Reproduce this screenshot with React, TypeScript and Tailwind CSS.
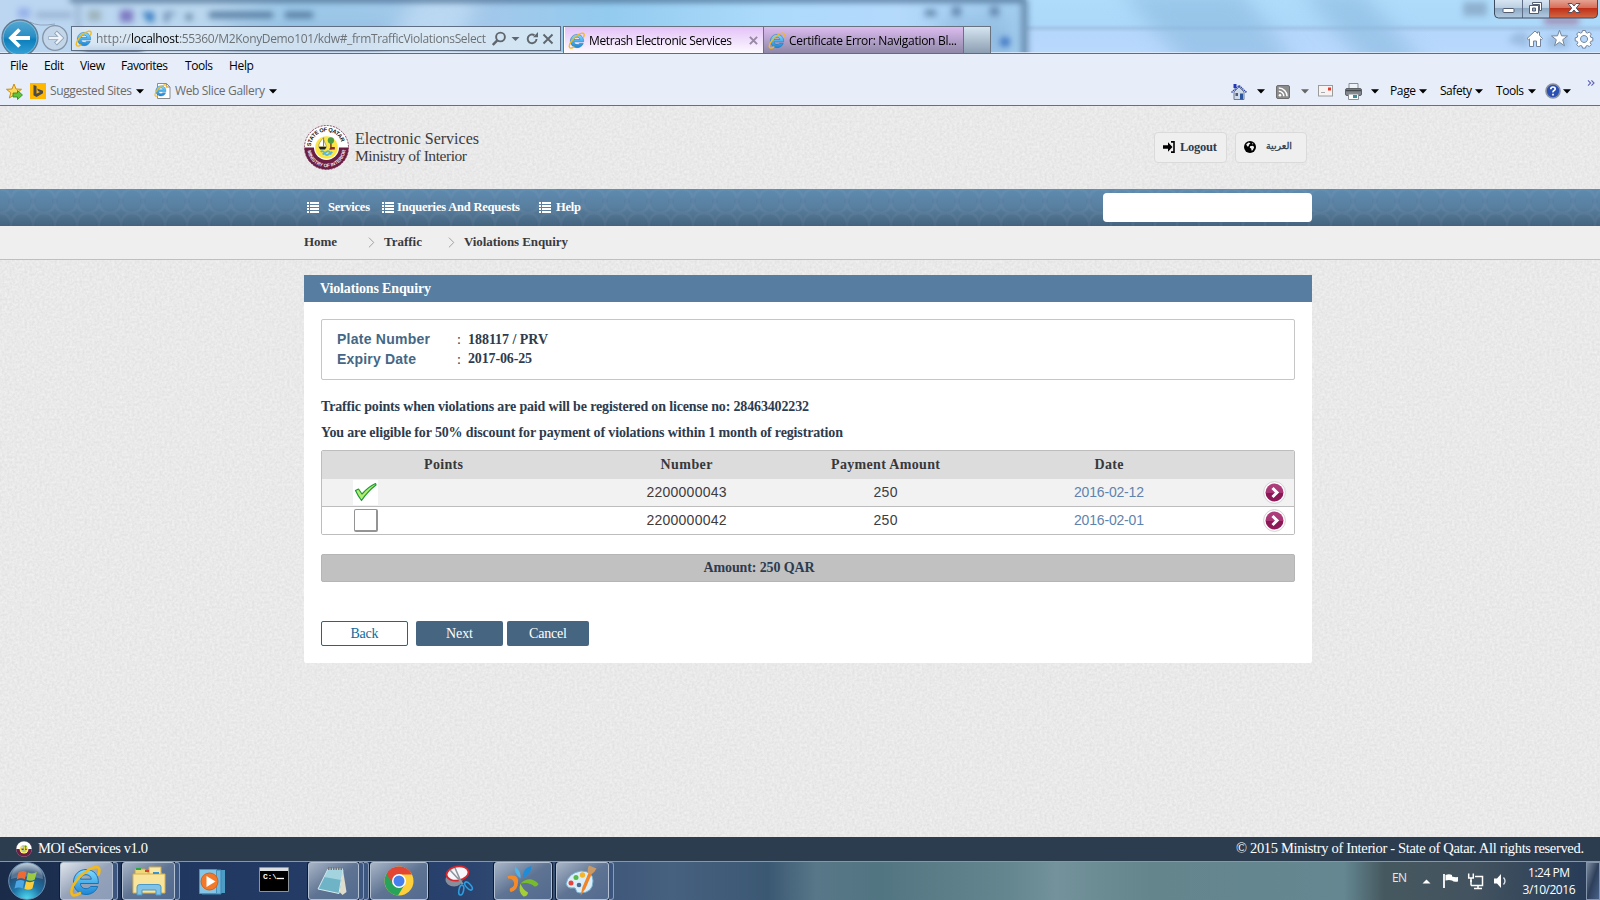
import React, { useLayoutEffect, useRef, useState } from "react";

/* Text run whose tracking is computed so that it fills the given width. */
function Fit({ w, className = "", children }: { w: number; className?: string; children: string }) {
  const ref = useRef<HTMLSpanElement>(null);
  const [ls, setLs] = useState<number | null>(null);
  useLayoutEffect(() => {
    if (ref.current && ls === null) {
      const n = ref.current.getBoundingClientRect().width;
      setLs((w - n) / Math.max(1, children.length - 1));
    }
  }, [ls, w, children]);
  return (
    <span
      ref={ref}
      className={"inline-block shrink-0 whitespace-pre " + className}
      style={ls === null ? undefined : { letterSpacing: ls, marginRight: -ls }}
    >
      {children}
    </span>
  );
}

const ui = "font-['Open_Sans','Noto_Sans',sans-serif]";

function IE({ className = "" }: { className?: string }) {
  return (
    <svg viewBox="0 0 32 32" className={"shrink-0 " + className}>
      <defs>
        <linearGradient id="ieb" x1="0" y1="0" x2="0" y2="1">
          <stop offset="0" stopColor="#7fdcff" />
          <stop offset="1" stopColor="#1c86d6" />
        </linearGradient>
      </defs>
      <path
        d="M17 4.500C10 4.500 4.500 10 4.500 17S10 29.500 17 29.500c5.500 0 10-3 11.700-8H21.500c-1 1.500-2.600 2.200-4.500 2.200-3.300 0-5.400-1.900-5.600-5.200H29.300C30 10.500 25 4.500 17 4.500ZM11.500 14.200c.4-2.800 2.500-4.500 5.500-4.500s5 1.700 5.300 4.500Z"
        fill="url(#ieb)"
        stroke="#1673b8"
        strokeWidth="1"
      />
      <path
        d="M29.500 9.500C31.500 4 30 1.500 26 2.200 19 3.500 8 12.500 3.800 21.500 1.500 26.500 2 31 6 30.300c1.500-.2 3.500-1.200 5-2.200"
        fill="none"
        stroke="#f6b915"
        strokeWidth="2.600"
        strokeLinecap="round"
      />
    </svg>
  );
}

function Arrow({ className = "" }: { className?: string }) {
  return (
    <svg viewBox="0 0 8 5" className={"h-[5px] w-[8px] shrink-0 " + className}>
      <path d="M0 0.300H8L4 4.600Z" fill="currentColor" />
    </svg>
  );
}

function Emblem({ className = "", rim = true }: { className?: string; rim?: boolean }) {
  return (
    <svg viewBox="0 0 46 46" className={"shrink-0 " + className}>
      <circle cx="23" cy="23" r="22.500" fill="#fff" stroke="#7c2a4e" strokeWidth="0.900" strokeDasharray="2 1.200" />
      <path d="M.5 23a22.500 22.500 0 0 0 45 0Z" fill="#6b1d44" />
      <circle cx="23" cy="23" r="12.800" fill="#fff" />
      <circle cx="23" cy="23" r="11.600" fill="#fbe645" />
      <path d="M20 13v9M20 13c-3 3-5 6-5 9h5ZM20 15l3 7h-3Z" fill="#fff" stroke="#666" strokeWidth="0.500" />
      <path d="M15 22.500h8l-1.500 2.500h-5Z" fill="#222" />
      <path d="M27.500 17v8" stroke="#7a4a25" strokeWidth="1.600" />
      <circle cx="27.500" cy="15.800" r="3.200" fill="#4d9a3f" />
      <path d="M25.500 25h6v-2.500h-4Z" fill="#8a2a38" />
      <path d="M17 27.500q1.500-1.500 3 0t3 0 3 0 3 0M19 30q1.500-1.500 3 0t3 0 3 0" fill="none" stroke="#58b7dd" strokeWidth="1.700" />
      {rim && (
        <>
          <defs>
            <path id="arcTop" d="M7.300 25a15.900 15.900 0 1 1 31.400 0" />
            <path id="arcBot" d="M3.400 23.500a19.600 19.600 0 0 0 39.200 0" />
          </defs>
          <text fontFamily="Liberation Sans, sans-serif" fontSize="5.700" fontWeight="700" fill="#111">
            <textPath href="#arcTop" textLength="44" startOffset="3">STATE OF QATAR</textPath>
          </text>
          <text fontFamily="Liberation Sans, sans-serif" fontSize="5" fontWeight="700" fill="#f4e4ec">
            <textPath href="#arcBot" textLength="56" startOffset="3">MINISTRY OF INTERIOR</textPath>
          </text>
        </>
      )}
    </svg>
  );
}

function TitleBackdrop() {
  return (
    <svg className="absolute inset-0 h-[54px] w-[1600px]" viewBox="0 0 1600 54" preserveAspectRatio="none">
      <defs>
        <filter id="b3" x="-30%" y="-100%" width="160%" height="300%" colorInterpolationFilters="sRGB"><feGaussianBlur stdDeviation="3" /></filter>
        <filter id="b8" x="-30%" y="-100%" width="160%" height="300%" colorInterpolationFilters="sRGB"><feGaussianBlur stdDeviation="10" /></filter>
        <linearGradient id="tbg" x1="0" x2="1" y1="0" y2="0">
          <stop offset="0" stopColor="#bcd6f2" />
          <stop offset="0.130" stopColor="#b9d6ee" />
          <stop offset="0.180" stopColor="#9cc8e8" />
          <stop offset="0.300" stopColor="#a3c8ea" />
          <stop offset="0.380" stopColor="#93cbef" />
          <stop offset="0.480" stopColor="#acdafb" />
          <stop offset="0.560" stopColor="#b4d9fb" />
          <stop offset="0.620" stopColor="#a2cdee" />
          <stop offset="1" stopColor="#b0dcfd" />
        </linearGradient>
        <linearGradient id="tbr" x1="0" x2="0" y1="0" y2="1">
          <stop offset="0" stopColor="#b0dcfb" />
          <stop offset="0.450" stopColor="#acd8f9" />
          <stop offset="0.520" stopColor="#a2c6e8" />
          <stop offset="0.600" stopColor="#b5d7fb" />
          <stop offset="1" stopColor="#b9d9fd" />
        </linearGradient>
      </defs>
      <rect width="1600" height="54" fill="url(#tbg)" />
      <rect x="1026" width="574" height="54" fill="url(#tbr)" />
      <g filter="url(#b8)">
        <path d="M1120-10h120l60 80h-110ZM1300-10h60l70 80h-60Z" fill="#86b6dc" opacity="0.550" />
        <rect x="230" y="30" width="190" height="30" fill="#8cb6dd" />
        <path d="M420-10h60l-30 80h-80Z" fill="#c5def5" opacity="0.700" />
        <rect x="940" y="20" width="70" height="40" fill="#8fb8de" opacity="0.800" />
      </g>
      <g filter="url(#b3)">
        <rect x="70" y="-3" width="955" height="5" fill="#47698c" />
        <rect x="1021" y="0" width="7" height="60" fill="#6b8fb0" />
        <rect x="76" y="0" width="4" height="60" fill="#95b0cc" />
        <rect x="18" y="8" width="12" height="10" fill="#95b0e8" />
        <rect x="36" y="12" width="36" height="6" fill="#98b2d1" />
        <rect x="88" y="10" width="13" height="11" fill="#9db3bb" />
        <rect x="120" y="10" width="13" height="12" fill="#7c78c0" />
        <path d="M142 12h12v10h-6Z" fill="#387cc0" />
        <path d="M164 12h11v3h-6v7h-5Z" fill="#6d8db3" />
        <circle cx="189" cy="17" r="3" fill="#476888" />
        <rect x="209" y="12" width="64" height="6" fill="#51779c" />
        <rect x="285" y="12" width="28" height="6" fill="#51779c" />
        <rect x="84" y="48" width="58" height="6" fill="#205eab" />
        <rect x="925" y="10" width="11" height="6" fill="#5d82a4" />
        <rect x="952" y="7" width="9" height="9" fill="#6385ad" />
        <rect x="990" y="7" width="9" height="9" fill="#6385ad" />
        <circle cx="1005" cy="42" r="5" fill="#3c73c4" />
        <rect x="1463" y="2" width="24" height="14" fill="#8fb1d0" />
        <rect x="1544" y="18" width="35" height="6" fill="#9d80a8" />
        <path d="M1508 42q6-14 20-8v14ZM1548 36h20v12h-20Z" fill="#82a4c8" opacity="0.500" />
      </g>
      <rect y="52" width="1600" height="1" fill="#e8f1fc" opacity="0.700" />
      <rect y="53" width="1600" height="1" fill="#5d6c84" />
    </svg>
  );
}

function WindowControls() {
  return (
    <svg viewBox="0 0 104 21" className="absolute left-[1494px] top-0 h-[21px] w-[104px]">
      <defs>
        <linearGradient id="wb" x1="0" x2="0" y1="0" y2="1">
          <stop offset="0" stopColor="#dbe8f5" /><stop offset="0.450" stopColor="#bccfe2" />
          <stop offset="0.500" stopColor="#8ea9c4" /><stop offset="1" stopColor="#b5cce2" />
        </linearGradient>
        <linearGradient id="wr" x1="0" x2="0" y1="0" y2="1">
          <stop offset="0" stopColor="#e8a99b" /><stop offset="0.450" stopColor="#d8705a" />
          <stop offset="0.500" stopColor="#c03018" /><stop offset="1" stopColor="#d26a45" />
        </linearGradient>
      </defs>
      <path d="M.5-1V14q0 4 4 4h95q4 0 4-4V-1Z" fill="url(#wb)" />
      <path d="M55.500-1v19h44q4 0 4-4V-1Z" fill="url(#wr)" />
      <path d="M28.500 0v18M55.500 0v18" stroke="#5c6f87" />
      <path d="M.5-1V14q0 4 4 4h95q4 0 4-4V-1" fill="none" stroke="#3d4b60" />
      <rect x="9" y="8.500" width="11" height="4" rx="1" fill="#fff" stroke="#545d70" />
      <path d="M38.500 2.500h9v8h-2v-6h-7Z" fill="#fff" stroke="#545d70" />
      <path d="M35.500 5.500h9v8h-9ZM38.500 8h3v3h-3Z" fill="#fff" fillRule="evenodd" stroke="#545d70" />
      <path d="M74 3.500h4l2 2.500 2-2.500h4l-3.700 4.500 3.700 4.500h-4l-2-2.500-2 2.500h-4l3.700-4.500Z" fill="#fff" stroke="#545060" />
    </svg>
  );
}

function ToolIcons() {
  return (
    <svg viewBox="0 0 72 22" className="absolute left-[1524px] top-[27px] h-[22px] w-[72px]" fill="#fff" stroke="#73849a" strokeWidth="1" strokeLinejoin="round">
      <path d="M3 11.500 11 4l2.500 2.300V5h2v3.300l3 3.200-1 1.200-1-.8v7.600h-4v-5.500h-3v5.500h-4v-7.600l-1 .8Z" />
      <path d="m35.500 3.200 2 5.600 6 .2-4.800 3.700 1.700 6-4.900-3.500-4.900 3.500 1.700-6L27.500 9l6-.2Z" />
      <path
        fillRule="evenodd"
        d="M58.500 3.500h3l.5 2 1.500.6 1.800-1.100 2 2-1.100 1.800.6 1.500 2 .5v3l-2 .5-.6 1.500 1.100 1.800-2 2-1.800-1.100-1.500.6-.5 2h-3l-.5-2-1.500-.6-1.800 1.100-2-2 1.100-1.800-.6-1.500-2-.5v-3l2-.5.6-1.500-1.100-1.800 2-2L56.500 6.100l1.500-.6ZM60 8.500a3.500 3.500 0 1 0 .1 0Z"
      />
    </svg>
  );
}

function TitleBar() {
  return (
    <div className={"relative h-[54px] overflow-hidden " + ui}>
      <TitleBackdrop />
      <WindowControls />
      <ToolIcons />
      <div className="relative flex h-[54px] items-start">
        <svg viewBox="0 0 71 54" className="h-[54px] w-[71px] shrink-0">
          <defs>
            <linearGradient id="bk" x1="0" x2="0" y1="0" y2="1">
              <stop offset="0" stopColor="#5aa9d2" /><stop offset="0.450" stopColor="#2a8fc4" />
              <stop offset="0.550" stopColor="#0b7fbd" /><stop offset="1" stopColor="#3aa4d8" />
            </linearGradient>
          </defs>
          <path d="M30 22q8 5 25 2" fill="none" stroke="#8fa3bb" />
          <circle cx="20" cy="38" r="18" fill="url(#bk)" stroke="#64798f" strokeWidth="1.300" />
          <circle cx="20" cy="38" r="16.800" fill="none" stroke="#8cc8e4" strokeWidth="0.700" />
          <path d="M30 38H12M19.500 29.500 11 38l8.500 8.500" fill="none" stroke="#fff" strokeWidth="3.800" />
          <circle cx="55" cy="38" r="12.300" fill="#c3d5e8" stroke="#8494a8" strokeWidth="1.300" />
          <path d="M48.500 38h12M55.500 32l6 6-6 6" fill="none" stroke="#8ea0b6" strokeWidth="4" />
          <path d="M49 38h11M56 32.500l5.500 5.500-5.500 5.500" fill="none" stroke="#eef4fa" strokeWidth="2.400" />
        </svg>
        <div className="mt-[26px] flex h-[25px] w-[490px] shrink-0 items-center border border-[#5f6e82] bg-[#e4edf6]/75 pl-[3px] text-[12px] text-[#6d7276]">
          <IE className="h-[17px] w-[17px]" />
          <div className="ml-[4px] flex w-[391px] pt-px">
            <Fit w={35}>http://</Fit>
            <Fit w={48} className="text-black">localhost</Fit>
            <Fit w={307}>:55360/M2KonyDemo101/kdw#_frmTrafficViolationsSelect</Fit>
          </div>
          <svg viewBox="0 0 64 16" className="ml-[5px] h-[16px] w-[64px] shrink-0" fill="none" stroke="#60666d" strokeWidth="1.900">
            <circle cx="8.500" cy="6" r="4.400" /><path d="m5.300 9.300-4.500 4.700" strokeWidth="2.400" />
            <path d="M19.500 6h8l-4 4Z" fill="#60666d" stroke="none" />
            <path d="M44.500 8a4.400 4.400 0 1 1-2-3.800" /><path d="M41 6.200h5V1Z" fill="#60666d" stroke="none" />
            <path d="m51.500 3.500 9 9M60.500 3.500l-9 9" />
          </svg>
        </div>
        <div className="ml-[2px] mt-[26px] flex h-[27px] w-[428px] shrink-0 border border-b-0 border-[#69737f] text-[12px] text-black">
          <div className="flex w-[199px] items-center border-l border-white bg-linear-to-b from-[#e3c2f7] to-[#fdfaff] pl-[3px] pt-px">
            <IE className="h-[17px] w-[17px]" />
            <Fit w={143} className="ml-[4px]">Metrash Electronic Services</Fit>
            <svg viewBox="0 0 10 10" className="ml-[17px] h-[9px] w-[9px]"><path d="m1 1 8 8M9 1 1 9" stroke="#9887a5" strokeWidth="2.200" /></svg>
          </div>
          <div className="flex w-[201px] items-center border-x border-[#69737f] bg-linear-to-b from-[#dcbcf0] to-[#8f87a8] pl-[4px] pt-px">
            <IE className="h-[17px] w-[17px]" />
            <Fit w={168} className="ml-[4px]">Certificate Error: Navigation Bl...</Fit>
          </div>
          <div className="flex-1 bg-linear-to-b from-[#d6e5f1] to-[#8c9eb2]" />
        </div>
      </div>
    </div>
  );
}

function Menus() {
  return (
    <div className={"h-[52px] border-b border-[#6e6e72] bg-[#e7eefa] text-[12px] text-black " + ui}>
      <div className="flex h-[24px] items-center pl-[10px]">
        <Fit w={18}>File</Fit>
        <Fit w={20} className="ml-[16px]">Edit</Fit>
        <Fit w={25} className="ml-[16px]">View</Fit>
        <Fit w={47} className="ml-[16px]">Favorites</Fit>
        <Fit w={28} className="ml-[17px]">Tools</Fit>
        <Fit w={25} className="ml-[16px]">Help</Fit>
      </div>
      <div className="flex h-[26px] items-center justify-between">
        <div className="flex items-center pl-[6px] text-[#6b6b6b]">
          <svg viewBox="0 0 17 17" className="h-[17px] w-[17px]">
            <path d="m8 1 2 5 5.500.3-4.300 3.500 1.500 5.200L8 12l-4.700 3 1.500-5.200L.5 6.300 6 6Z" fill="#fbd95a" stroke="#c98d12" />
            <path d="M7 10h4.500V7.500L16.500 12l-5 4.500V14H7Z" fill="#5fc43c" stroke="#2c8420" strokeWidth="0.800" />
          </svg>
          <svg viewBox="0 0 16 16" className="ml-[7px] h-[16px] w-[16px]">
            <rect width="16" height="16" fill="#ffb700" />
            <path d="m3.500 2 3 1v7.700L10 9 8 8l-1-2.600 6 2.300v2.600L6.500 14l-3-1.700Z" fill="#4b4b4b" />
          </svg>
          <Fit w={82} className="ml-[4px]">Suggested Sites</Fit>
          <Arrow className="ml-[4px] text-black" />
          <div className="relative ml-[10px] h-[16px] w-[17px]">
            <svg viewBox="0 0 17 16" className="absolute inset-0 h-[16px] w-[17px]"><path d="M3.500.5h9l3.500 3.500v11.500H3.500ZM12.500.5V4H16" fill="#fff" stroke="#8c8c8c" /></svg>
            <IE className="absolute left-0 top-[1px] h-[13px] w-[13px]" />
          </div>
          <Fit w={90} className="ml-[4px]">Web Slice Gallery</Fit>
          <Arrow className="ml-[4px] text-black" />
        </div>
        <div className="flex w-[369px] items-center">
          <svg viewBox="0 0 16 17" className="h-[17px] w-[16px]">
            <path d="M3 9v7.500h10V9L8 4Z" fill="#cfdbe8" stroke="#6c7b92" /><path d="M.5 9.500 8 2.500l7.500 7" fill="none" stroke="#2f46a8" strokeWidth="1.500" strokeDasharray="1.500 .6" />
            <path d="M2.500 1h3v4h-3Z" fill="#2238b8" /><path d="M9 10.500h3v6H9Z" fill="#2c55a0" /><path d="M4.500 10h2.500v3H4.500Z" fill="#4c5a77" />
          </svg>
          <Arrow className="ml-[10px]" />
          <svg viewBox="0 0 14 14" className="ml-[11px] mt-[2px] h-[14px] w-[14px]">
            <rect x=".5" y=".5" width="13" height="13" rx="1.500" fill="#8c8c8c" stroke="#6e6e6e" />
            <circle cx="4" cy="10.300" r="1.300" fill="#fff" /><path d="M2.800 6.300a5 5 0 0 1 5 5M2.800 3a8.300 8.300 0 0 1 8.300 8.300" fill="none" stroke="#fff" strokeWidth="1.500" />
          </svg>
          <Arrow className="ml-[11px] text-[#666]" />
          <svg viewBox="0 0 15 12" className="ml-[9px] h-[12px] w-[15px]">
            <rect x=".5" y=".5" width="14" height="10.500" fill="#f7f3f3" stroke="#9b9b9b" /><path d="M10 2.500h3v3h-3Z" fill="#e23a2e" /><path d="M3 7.500h4" stroke="#aaa" />
          </svg>
          <svg viewBox="0 0 17 17" className="ml-[12px] h-[17px] w-[17px]">
            <path d="M4 .5h9V6H4Z" fill="#eef3f8" stroke="#858c94" /><rect x=".5" y="5.500" width="16" height="7" rx="1.500" fill="#83888d" stroke="#5d6267" />
            <path d="M1 7.500h15" stroke="#45494d" strokeWidth="1.500" /><path d="M3.500 11h10v5.500h-10Z" fill="#fff" stroke="#8b9196" /><path d="M8 12h4v3H8Z" fill="#3b8f96" />
          </svg>
          <Arrow className="ml-[9px]" />
          <Fit w={26} className="ml-[11px]">Page</Fit>
          <Arrow className="ml-[3px]" />
          <Fit w={32} className="ml-[13px]">Safety</Fit>
          <Arrow className="ml-[3px]" />
          <Fit w={28} className="ml-[13px]">Tools</Fit>
          <Arrow className="ml-[4px]" />
          <svg viewBox="0 0 16 16" className="ml-[9px] h-[16px] w-[16px]">
            <circle cx="8" cy="8" r="7" fill="#2a50b4" stroke="#8c939e" strokeWidth="1.600" />
            <path d="M5.800 6.300q0-2.300 2.200-2.300t2.200 1.900q0 1-1.200 1.600t-1 1.900M8 10.800v1.700" fill="none" stroke="#fff" strokeWidth="1.700" />
          </svg>
          <Arrow className="ml-[2px]" />
          <svg viewBox="0 0 8 7" className="mb-[17px] ml-[16px] h-[6px] w-[8px]"><path d="m.5.500 3 3-3 3M4.500.500l3 3-3 3" fill="none" stroke="#6064b8" strokeWidth="1.300" /></svg>
        </div>
      </div>
    </div>
  );
}

function Texture() {
  return (
    <svg className="absolute inset-0 h-full w-full">
      <filter id="grain" x="0" y="0" width="100%" height="100%" colorInterpolationFilters="sRGB">
        <feTurbulence type="fractalNoise" baseFrequency="0.400" numOctaves="2" seed="4" stitchTiles="stitch" />
        <feColorMatrix values="0.090 0 0 0 0.869  0.090 0 0 0 0.869  0.090 0 0 0 0.869  0 0 0 0 1" />
      </filter>
      <rect width="100%" height="100%" filter="url(#grain)" />
    </svg>
  );
}

function ListIcon({ className = "" }: { className?: string }) {
  return (
    <svg viewBox="0 0 12 11" className={"h-[11px] w-[12px] shrink-0 " + className} shapeRendering="crispEdges">
      <path d="M0 1h2M0 4h2M0 7h2M0 10h2M3 1h9M3 4h9M3 7h9M3 10h9" stroke="#fff" strokeWidth="2" />
    </svg>
  );
}

function Chevron({ className = "" }: { className?: string }) {
  return (
    <svg viewBox="0 0 7 12" className={"h-[11px] w-[7px] shrink-0 " + className}><path d="m.7.700 5.300 5.300-5.300 5.300" fill="none" stroke="#999" /></svg>
  );
}

function SiteHeader() {
  return (
    <>
      <header className="relative flex h-[83px] items-start pl-[304px]">
        <Emblem className="mt-[19px] h-[45px] w-[45px]" />
        <div className="ml-[6px] mt-[24px] flex w-[799px] flex-col items-start text-[16px] leading-[17px] text-[#3b3b3f]">
          <Fit w={124}>Electronic Services</Fit>
          <Fit w={112} className="text-[15.500px]">Ministry of Interior</Fit>
        </div>
        <button className="mt-[26px] flex h-[31px] w-[73px] shrink-0 items-center rounded-[4px] border border-[#dadada] bg-[#efefef] pb-px pl-[8px] text-[12.500px] font-bold text-[#2c3c50]">
          <svg viewBox="0 0 12 12" className="h-[12px] w-[12px] shrink-0">
            <path d="M0 4.300h5V1.300L9.500 6 5 10.700V7.700H0Z" fill="#000" /><path d="M8 .9h3v10.200H8" fill="none" stroke="#000" strokeWidth="1.600" />
          </svg>
          <Fit w={37} className="ml-[5px]">Logout</Fit>
        </button>
        <button className="ml-[8px] mt-[26px] flex h-[31px] w-[72px] shrink-0 items-center rounded-[4px] border border-[#dadada] bg-[#efefef] pb-px pl-[8px] text-[#2c3c50]">
          <svg viewBox="0 0 12 12" className="h-[12px] w-[12px] shrink-0">
            <circle cx="6" cy="6" r="6" fill="#000" />
            <path d="M2.200 3.300 4.700 1.500l1.800.8L5 3.800l-.3 1.500-1.400.3ZM6 5.200l2.400-.5 1.200.6.500 1.200-1.400 2.800-1 .5-.6-2.300-1.300-.8ZM8 1.800l1.500 1.100-1 .6Z" fill="#efefef" />
          </svg>
          <span dir="rtl" className="ml-[10px] mb-[2px] whitespace-nowrap font-['DejaVu_Sans',sans-serif] text-[9.500px] leading-[14px] [-webkit-text-stroke:0.300px_#2c3c50]">العربية</span>
        </button>
      </header>
      <nav className="relative flex h-[37px] items-center bg-linear-to-b from-[#5e8bb0] via-[#587f9f] to-[#44637f] pl-[307px] text-[12.500px] font-bold text-white">
        <svg className="absolute inset-0 h-full w-full">
          <defs>
            <pattern id="lattice" width="22" height="24" patternUnits="userSpaceOnUse">
              <path d="M0 0q11 1 11 12Q11 23 0 24M22 0Q11 1 11 12q0 11 11 12" fill="none" stroke="#a5b7c5" strokeWidth="2.500" opacity="0.090" />
              <circle cx="11" cy="12" r="3" fill="#2d4f6c" opacity="0.080" />
            </pattern>
          </defs>
          <rect width="100%" height="100%" fill="url(#lattice)" />
        </svg>
        <div className="relative flex items-center">
          <ListIcon />
          <Fit w={42} className="mb-px ml-[9px]">Services</Fit>
          <ListIcon className="ml-[12px]" />
          <Fit w={123} className="mb-px ml-[3px]">Inqueries And Requests</Fit>
          <ListIcon className="ml-[19px]" />
          <Fit w={25} className="mb-px ml-[5px]">Help</Fit>
          <div className="ml-[522px] h-[29px] w-[209px] rounded-[4px] bg-white" />
        </div>
      </nav>
      <div className="relative flex h-[34px] items-center border-b border-[#bfbfbf] bg-[#efefef] pb-[2px] pl-[304px] text-[13px] font-bold text-[#3a3a3c]">
        <Fit w={33}>Home</Fit>
        <Chevron className="ml-[31px] mt-px" />
        <Fit w={38} className="ml-[9px]">Traffic</Fit>
        <Chevron className="ml-[26px] mt-px" />
        <Fit w={104} className="ml-[9px]">Violations Enquiry</Fit>
      </div>
    </>
  );
}

function GoIcon({ id }: { id: string }) {
  return (
    <svg viewBox="0 0 23 23" className="h-[23px] w-[23px]">
      <defs>
        <linearGradient id={id} x1="0" x2="0" y1="0" y2="1">
          <stop offset="0" stopColor="#b03f7f" /><stop offset=".5" stopColor="#a83674" /><stop offset=".52" stopColor="#8a1555" /><stop offset="1" stopColor="#8f1c5a" />
        </linearGradient>
      </defs>
      <circle cx="11.500" cy="11.500" r="10.900" fill="#fff" stroke="#d2d2d2" />
      <circle cx="11.500" cy="11.500" r="9" fill={"url(#" + id + ")"} />
      <path d="m9.500 7 4.500 4.500L9.500 16" fill="none" stroke="#fff" strokeWidth="3" />
    </svg>
  );
}

function Row({ num, date, checked }: { num: string; date: string; checked?: boolean }) {
  return (
    <div className={"flex border-[#bdbdbd] text-[14px] leading-[27px] text-[#3c3c3f] " + (checked ? "h-[28px] border-b bg-[#f2f2f2]" : "h-[27px] bg-white")}>
      <div className="flex w-[243px] pl-[31px]">
        {checked ? (
          <svg viewBox="0 0 25 25" className="mt-px h-[25px] w-[25px] bg-white">
            <path d="m2.500 10.500 3-1.500 3.500 5Q15 7 22.500 3.500L23 5Q15 11 8.500 20.500 5 16 2.500 10.500Z" fill="#b4ec70" stroke="#1e9a3c" strokeWidth="1.200" strokeLinejoin="round" />
          </svg>
        ) : (
          <div className="ml-[1px] mt-[2px] h-[23px] w-[24px] rounded-[2px] border border-b-2 border-r-2 border-[#949494] bg-white" />
        )}
      </div>
      <div className="flex w-[243px] justify-center"><Fit w={80}>{num}</Fit></div>
      <div className="flex w-[155px] justify-center"><Fit w={24}>250</Fit></div>
      <div className="flex w-[292px] justify-center text-[#5e83ae]"><Fit w={70}>{date}</Fit></div>
      <div className="ml-[8px] mt-[2px]"><GoIcon id={"go" + num} /></div>
    </div>
  );
}

function Panel() {
  return (
    <main className="relative ml-[304px] mt-[15px] h-[388px] w-[1008px] rounded-b-[2px] bg-white text-[14px] text-[#2e3b4e]">
      <h1 className="flex h-[27px] items-center bg-[#577ea0] pl-[16px] text-[14px] font-bold text-white"><Fit w={111}>Violations Enquiry</Fit></h1>
      <div className="px-[17px]">
        <section className="mt-[17px] flex h-[61px] flex-col rounded-[2px] border border-[#c6c6c6] pl-[15px] pt-[9px]">
          <div className="flex h-[20px] items-center">
            <div className="w-[120px] font-['Liberation_Sans',sans-serif] text-[14px] font-bold text-[#456785]"><Fit w={93}>Plate Number</Fit></div>
            <span className="w-[11px]">:</span>
            <Fit w={80} className="font-bold">188117 / PRV</Fit>
          </div>
          <div className="flex h-[20px] items-center">
            <div className="w-[120px] font-['Liberation_Sans',sans-serif] text-[14px] font-bold text-[#456785]"><Fit w={79}>Expiry Date</Fit></div>
            <span className="w-[11px]">:</span>
            <Fit w={64} className="mb-px font-bold">2017-06-25</Fit>
          </div>
        </section>
        <div className="mt-[13px] flex h-[26px] items-center font-bold"><Fit w={488}>Traffic points when violations are paid will be registered on license no: 28463402232</Fit></div>
        <div className="flex h-[26px] items-center font-bold"><Fit w={522}>You are eligible for 50% discount for payment of violations within 1 month of registration</Fit></div>
        <section className="mt-[5px] w-[974px] overflow-hidden rounded-[2px] border border-[#bdbdbd]">
          <div className="flex h-[28px] items-center bg-[#dcdcdc] pb-[2px] text-[14px] font-bold text-[#38383b]">
            <div className="flex w-[243px] justify-center"><Fit w={39}>Points</Fit></div>
            <div className="flex w-[243px] justify-center"><Fit w={52}>Number</Fit></div>
            <div className="flex w-[155px] justify-center"><Fit w={109}>Payment Amount</Fit></div>
            <div className="flex w-[292px] justify-center"><Fit w={29}>Date</Fit></div>
          </div>
          <div className="font-['Liberation_Sans',sans-serif]">
            <Row num="2200000043" date="2016-02-12" checked />
            <Row num="2200000042" date="2016-02-01" />
          </div>
        </section>
        <div className="mt-[19px] flex h-[28px] items-center justify-center rounded-[2px] border border-[#b5b5b5] bg-[#c1c1c1] pb-px pr-[98px] font-bold"><Fit w={111}>Amount: 250 QAR</Fit></div>
        <div className="mt-[39px] flex text-[14px]">
          <button className="flex h-[25px] w-[87px] items-center justify-center rounded-[2px] border border-[#0f6b9c] bg-white text-[#0f6b9c]"><Fit w={28}>Back</Fit></button>
          <button className="ml-[8px] flex h-[25px] w-[87px] items-center justify-center rounded-[2px] bg-[#456581] text-white"><Fit w={27}>Next</Fit></button>
          <button className="ml-[4px] flex h-[25px] w-[82px] items-center justify-center rounded-[2px] bg-[#456581] text-white"><Fit w={38}>Cancel</Fit></button>
        </div>
      </div>
    </main>
  );
}

function Task({ className = "", children }: { className?: string; children: React.ReactNode }) {
  return (
    <div className={"flex h-[38px] shrink-0 items-center justify-center rounded-[3px] border border-[#b4c1d2] bg-linear-to-br shadow-[0_0_0_1px_#0e1d36] " + className}>
      {children}
    </div>
  );
}

const glass = "from-[#a9b5c6] via-[#5f7493] to-[#536b90]";

function Stack() {
  return <div className="h-[38px] w-[5px] shrink-0 rounded-r-[3px] border border-l-0 border-[#8b9cb5] bg-[#3d5680]" />;
}

function Taskbar() {
  return (
    <div className={"flex h-[39px] items-start overflow-hidden border-t border-[#8797ab] bg-[linear-gradient(90deg,#1a2b49_0%,#20375f_11%,#28416d_28%,#3f587b_38%,#46607f_42%,#3b5873_48%,#587788_51%,#527582_55%,#64868f_63%,#73929b_66%,#64858c_72%,#648791_84%,#46585f_86.500%,#43535f_92%,#253957_100%)] pl-[8px] " + ui}>
      <svg viewBox="0 0 38 38" className="h-[38px] w-[38px] shrink-0">
        <defs>
          <radialGradient id="orb" cx=".5" cy="1" r="1"><stop offset="0" stopColor="#4fe0f5" /><stop offset=".4" stopColor="#1f75a8" /><stop offset=".75" stopColor="#274a70" /><stop offset="1" stopColor="#b5cada" /></radialGradient>
        </defs>
        <circle cx="19" cy="19" r="18.300" fill="url(#orb)" stroke="#6e93b3" />
        <path d="M3 17a16 16 0 0 1 32 0q-16-5-32 0Z" fill="#fff" opacity=".22" />
        <path d="M10.500 10.500q4-2.500 8-.5l-1.600 7.300q-4-2-8.200.3Z" fill="#ee6a35" />
        <path d="M20 10.500q4.500 2 8.800-.5l-2 7.500q-4 2.200-8.300.3Z" fill="#9bcb43" />
        <path d="M8.200 19.200q4-2.300 8.200-.3l-1.700 7.500q-4-2-8.200.2Z" fill="#4ca6e4" />
        <path d="M18 19.300q4.200 2 8.400-.2l-2 7.400q-4 2.300-8 .3Z" fill="#fbcc3d" />
      </svg>
      <Task className="ml-[14px] w-[53px] from-[#dfe5ec] via-[#95a2b8] to-[#8c9dba]"><IE className="mr-[3px] h-[32px] w-[32px]" /></Task>
      <Stack />
      <Task className={"ml-[4px] w-[53px] " + glass}>
        <svg viewBox="0 0 34 30" className="h-[30px] w-[34px]">
          <path d="M3 3h10l2 3h14v20H3Z" fill="#f2d67a" stroke="#c7a146" /><path d="M17 1h12v8H17Z" fill="#f9e7a4" stroke="#cda94e" />
          <path d="M1 8h32v19H1Z" fill="#f8e59b" stroke="#d2b058" /><path d="M4 2h5v2H4Z" fill="#27a745" /><path d="M13 4h4v2h-4Z" fill="#d8432c" /><path d="M21 6h6v2h-6Z" fill="#3594d2" />
          <path d="M5 29v-8q0-2.500 3-2.500h18q3 0 3 2.500v8h-5v-5H10v5Z" fill="#80c3e6" stroke="#4c98c7" />
        </svg>
      </Task>
      <Stack />
      <svg viewBox="0 0 27 26" className="ml-[19px] mt-[7px] h-[26px] w-[27px] shrink-0">
        <path d="M5 1h21v23H5Z" fill="#4c9cc6" /><path d="M3 1h19v24H3Z" fill="#70b8dd" stroke="#3c86b2" /><path d="M.5.500h17v24H.5Z" fill="#85c5e6" stroke="#4a95bf" />
        <circle cx="10.500" cy="12.500" r="8.500" fill="#f3792a" stroke="#d85f18" /><path d="m7.500 7 9 5.500-9 5.500Z" fill="#fff" />
      </svg>
      <svg viewBox="0 0 30 25" className="ml-[33px] mt-[5px] h-[25px] w-[30px] shrink-0">
        <path d="M.5.500h29v24H.5Z" fill="#000" stroke="#8b939b" /><path d="M1 1h28v3H1Z" fill="#dcdfe2" />
        <text x="4" y="12" fontFamily="Liberation Mono, monospace" fontSize="8" fontWeight="700" fill="#fff" textLength="14">C:\</text><path d="M18 11.500h7" stroke="#fff" strokeWidth="1.300" />
      </svg>
      <Task className={"ml-[19px] w-[51px] " + glass}>
        <svg viewBox="0 0 32 30" className="mr-[3px] h-[30px] w-[32px]">
          <path d="m27 4 3.500 22-4 3-3-3Z" fill="#dedccb" /><path d="M12 3h15l-4 24.500L2 23Z" fill="#6fb4c6" stroke="#d5edf2" /><path d="M12 3h15l-2 11L8 11Z" fill="#b9e0e8" opacity=".7" />
          <path d="M12 2.500h16" stroke="#777" strokeWidth="3" strokeDasharray="1.500 1" />
        </svg>
      </Task>
      <Stack /><Stack />
      <Task className={"ml-px w-[58px] " + glass}>
        <svg viewBox="0 0 30 30" className="h-[30px] w-[30px]">
          <circle cx="15" cy="15" r="14.500" fill="#fbd03b" />
          <path d="M15 15 2.500 7.700A14.500 14.500 0 0 0 14 29.500L21 18Z" fill="#27a35a" />
          <path d="M15 8.500h13A14.500 14.500 0 0 0 2.500 7.700L9 18Z" fill="#e14534" />
          <circle cx="15" cy="15" r="7" fill="#fff" /><circle cx="15" cy="15" r="5.500" fill="#4580ec" />
        </svg>
      </Task>
      <svg viewBox="0 0 30 32" className="ml-[17px] mt-[3px] h-[32px] w-[30px] shrink-0">
        <ellipse cx="9" cy="15" rx="8.500" ry="6.500" fill="#a8a8ac" opacity=".75" /><ellipse cx="12.500" cy="8.500" rx="11" ry="7" fill="#f6f6fb" stroke="#d8262d" strokeWidth="1.800" transform="rotate(-10 12.500 8.500)" />
        <path d="m5 5 13 14M10 3l7 16" stroke="#8d949c" strokeWidth="1.600" />
        <ellipse cx="16.500" cy="25" rx="2.300" ry="5" fill="none" stroke="#2d9ee0" strokeWidth="1.600" transform="rotate(12 16 24)" /><ellipse cx="23.500" cy="21" rx="2.300" ry="5" fill="none" stroke="#2d9ee0" strokeWidth="1.600" transform="rotate(-42 23.500 21)" />
      </svg>
      <Task className={"ml-[19px] w-[58px] " + glass}>
        <svg viewBox="0 0 32 32" className="h-[32px] w-[32px]">
          <path d="M8 1.500q-1.500 6 5.500 12 1-7-5.500-12Z" fill="#4db5ec" /><path d="M16 13.500Q15 3 24.500 1q0 8-8.500 12.500Z" fill="#1f8cda" />
          <path d="M.5 11Q12 9 11 17 11 25 4 27q-2-1-1-3.500 5-2 4-6t-6-4Z" fill="#f58a2a" />
          <path d="M13.500 18.500Q23 10 31.500 19q-1.500 3-4 2.500-5-5-14-3Z" fill="#78bb2d" /><path d="M13.500 18.500q2 6 7.500 9-.5 4-4.500 4-6-5-3-13Z" fill="#a5cf38" />
        </svg>
      </Task>
      <Task className={"ml-[4px] w-[53px] " + glass}>
        <svg viewBox="0 0 32 32" className="mr-[3px] h-[32px] w-[32px]">
          <path d="M1 19Q3 8 16 6q12 0 12 10 0 12-13 12-4 0-4-3t-4-2-6-4Z" fill="#d9eef9" stroke="#76acce" />
          <circle cx="6" cy="18" r="2.500" fill="#e5463b" /><circle cx="11" cy="12.500" r="2.500" fill="#57b947" /><circle cx="17.500" cy="10" r="2.700" fill="#f6b428" /><circle cx="14" cy="20" r="2.300" fill="#496d95" />
          <path d="m15.500 31 2-9 6-14 3 1.500-6 14Z" fill="#f08427" /><path d="M23 8q-1-5 1-7.500l7.500 3Q30 7 26 9.500Z" fill="#c99a66" />
        </svg>
      </Task>
      <Stack />
      <div className="ml-auto flex h-[39px] shrink-0 items-start text-white">
        <Fit w={15} className="mt-[8px] text-[12px] leading-[16px] text-[#e6e9ec]">EN</Fit>
        <svg viewBox="0 0 90 22" className="ml-[15px] mt-[8px] h-[22px] w-[90px]">
          <path d="m.5 13.500 4-4 4 4Z" fill="#fff" />
          <path d="M22 4v14" stroke="#fff" strokeWidth="1.800" /><path d="M23.500 5q3.500-1.500 6.500 0v1.500q3 1 6 .5v4.500q-4 1-6-1-3-1-6.500 0Z" fill="#fff" />
          <path d="M53 6.500h7.500v9H49M52 18.500h8M56 15.500v3M49 10v5.500" fill="none" stroke="#fff" strokeWidth="1.500" /><path d="M46.700 3.500v4.500h4.600V3.500M49 8v4" fill="none" stroke="#fff" strokeWidth="1.500" />
          <path d="M72 8.500h3l4-4.500v14l-4-4.500h-3Z" fill="#fff" /><path d="M81.500 7.500q3 3.500 0 7" fill="none" stroke="#dfe6ec" strokeWidth="1.300" />
        </svg>
        <div className="ml-[9px] mt-[2px] flex w-[56px] flex-col items-center text-[12px] leading-[17px]">
          <Fit w={42}>1:24 PM</Fit>
          <Fit w={53}>3/10/2016</Fit>
        </div>
        <div className="ml-[9px] h-[38px] w-[14px] border border-[#8494ab] bg-linear-to-br from-[#7e8d9e] via-[#2e3f5b] to-[#48628a]" />
      </div>
    </div>
  );
}

export default function App() {
  return (
    <div className="flex h-[900px] w-[1600px] flex-col overflow-hidden bg-[#e9e9e9] font-['Liberation_Serif',serif]">
      <TitleBar />
      <Menus />
      <div className="relative h-[731px] shrink-0">
        <Texture />
        <SiteHeader />
        <Panel />
      </div>
      <footer className="flex h-[24px] shrink-0 items-center bg-[#2d3d50] px-[16px] pb-px text-[14.500px] text-white">
        <Emblem rim={false} className="h-[16px] w-[16px]" />
        <Fit w={110} className="ml-[6px]">MOI eServices v1.0</Fit>
        <div className="ml-auto flex"><Fit w={348}>© 2015 Ministry of Interior - State of Qatar. All rights reserved.</Fit></div>
      </footer>
      <Taskbar />
    </div>
  );
}
